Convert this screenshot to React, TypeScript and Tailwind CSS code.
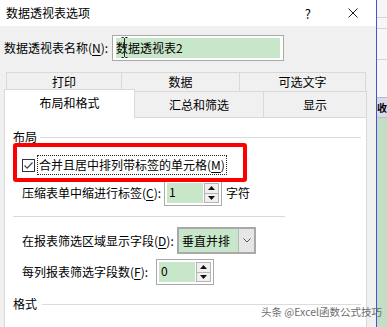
import React from 'react';

const font = { fontFamily: '"Noto Sans CJK SC", "Noto Sans", sans-serif' };

const U = ({ c }: { c: string }) => <span className="underline underline-offset-2">{c}</span>;

const Spin = ({ value }: { value: string }) => (
  <div className="flex h-[26px] w-[58px] border border-[#a9a9a9] bg-white p-[2px]">
    <div className="flex-1 bg-[#c8e6c9] pl-[2px] text-[12px] leading-[18px]">{value}</div>
    <div className="ml-[1px] flex w-[15px] flex-col">
      <div className="flex flex-1 items-center justify-center border border-[#b5b5b5] bg-[#f0f0f0]">
        <svg width="7" height="4" viewBox="0 0 7 4"><path d="M3.5 0 L7 4 L0 4 Z" fill="#111" /></svg>
      </div>
      <div className="-mt-px flex flex-1 items-center justify-center border border-[#b5b5b5] bg-[#f0f0f0]">
        <svg width="7" height="4" viewBox="0 0 7 4"><path d="M0 0 L7 0 L3.5 4 Z" fill="#111" /></svg>
      </div>
    </div>
  </div>
);

export default function App() {
  return (
    <div className="relative flex h-[327px] w-[387px] overflow-hidden bg-white text-black" style={font}>
      {/* dialog */}
      <div className="flex w-[376px] shrink-0 flex-col bg-[#f0f0f0]">
        <div className="flex h-[26px] shrink-0 items-center bg-white pl-[6px] text-[12px]">
          <span className="flex-1">数据透视表选项</span>
          <span className="mr-[37px] text-[13px] leading-none">?</span>
          <svg className="mr-[18px]" width="10" height="10" viewBox="0 0 10 10">
            <path d="M0.5 0.5 L9.5 9.5 M9.5 0.5 L0.5 9.5" stroke="#222" strokeWidth="1" />
          </svg>
        </div>

        <div className="mt-[9px] flex items-center pl-[4px] text-[12px]">
          <span className="w-[108px]">数据透视表名称(<U c="N" />):</span>
          <div className="relative h-[26px] w-[172px] border border-[#a9a9a9] bg-white px-[3px] py-[2px]">
            <div className="h-full bg-[#c8e6c9] text-[12px] leading-[20px]">数据透视表2</div>
            <svg className="absolute left-[8px] top-[1px]" width="7" height="21" viewBox="0 0 7 21">
              <path d="M0.5 0.5 H2.5 L3.5 1.5 L4.5 0.5 H6.5 M3.5 1.5 V19.5 M0.5 20.5 H2.5 L3.5 19.5 L4.5 20.5 H6.5 M1.5 10.5 H5.5" stroke="#222" fill="none" strokeWidth="1" />
            </svg>
          </div>
        </div>

        {/* tabs */}
        <div className="ml-[6px] mt-[11px] flex h-[25px] text-[12px]">
          <div className="flex w-[115px] items-center justify-center border-l border-t border-[#d9d9d9]">打印</div>
          <div className="flex w-[118px] items-center justify-center border-l border-t border-[#d9d9d9]">数据</div>
          <div className="flex w-[127px] items-center justify-center border-x border-t border-[#d9d9d9]">可选文字</div>
        </div>
        <div className="ml-[4px] flex h-[26px] items-end text-[12px]">
          <div className="relative z-10 -mb-px flex h-[29px] w-[131px] items-center justify-center border-x border-t border-[#d9d9d9] bg-white pb-[2px]">布局和格式</div>
          <div className="flex h-[26px] w-[128px] items-center justify-center border-t border-[#d9d9d9]">汇总和筛选</div>
          <div className="flex h-[26px] w-[104px] items-center justify-center border-x border-t border-[#d9d9d9]">显示</div>
        </div>

        {/* panel */}
        <div className="relative ml-[4px] h-[220px] w-[363px] shrink-0 border border-[#d9d9d9] bg-white text-[12px] leading-[16px]">
          <div className="mt-[11px] flex items-center pl-[8px] pr-[5px]">
            <span>布局</span>
            <div className="ml-[3px] h-px flex-1 bg-[#dcdcdc]" />
          </div>

          <div className="mt-[10px] flex h-[20px] items-center pl-[17px]">
            <div className="flex h-[13px] w-[13px] items-center justify-center border border-[#333]">
              <svg width="11" height="11" viewBox="0 0 11 11">
                <path d="M1.5 5.5 L4.2 8.2 L9.5 2.5" stroke="#444" strokeWidth="1.2" fill="none" />
              </svg>
            </div>
            <div className="ml-[2px] flex h-[20px] items-center border border-dotted border-[#222] px-[1px]">
              合并且居中排列带标签的单元格(<U c="M" />)
            </div>
          </div>

          <div className="mt-[5px] flex items-center pl-[17px]">
            <span className="w-[142px]">压缩表单中缩进行标签(<U c="C" />):</span>
            <Spin value="1" />
            <span className="ml-[4px]">字符</span>
          </div>

          <div className="ml-[8px] mt-[10px] h-px w-[272px] bg-[#d9d9d9]" />

          <div className="mt-[10px] flex items-center pl-[17px]">
            <span className="w-[155px]">在报表筛选区域显示字段(<U c="D" />):</span>
            <div className="flex h-[27px] w-[79px] border-2 border-[#a9a9a9]">
              <div className="flex flex-1 items-center bg-[#c8e6c9] pl-[3px]">垂直并排</div>
              <div className="flex w-[16px] items-center justify-center border-l border-[#b9b9b9] bg-[#e6e6e6]">
                <svg width="8" height="5" viewBox="0 0 8 5"><path d="M0.5 0.5 L4 4 L7.5 0.5" stroke="#555" fill="none" /></svg>
              </div>
            </div>
          </div>

          <div className="mt-[5px] flex items-center pl-[17px]">
            <span className="w-[134px]">每列报表筛选字段数(<U c="F" />):</span>
            <Spin value="0" />
          </div>

          <div className="mt-[11px] flex items-center pl-[8px] pr-[5px]">
            <span>格式</span>
            <div className="ml-[5px] h-px flex-1 bg-[#dcdcdc]" />
          </div>

          {/* red annotation */}
          <div className="absolute left-[8px] top-[25px] h-[39px] w-[234px] rounded-[3px] border-4 border-[#ff0000]" />
        </div>
      </div>

      <div className="w-px shrink-0 bg-[#4355d4]" />

      {/* excel sheet behind */}
      <div className="flex w-[10px] shrink-0 flex-col">
        <div className="h-[18px] border-b border-[#d4d4d4] bg-[#f6f6f6]" />
        <div className="h-[11px] border-b border-[#d4d4d4] bg-[#f6f6f6]" />
        <div className="h-[31px] border-b border-[#d4d4d4] bg-[#f6f6f6]" />
        <div className="h-[37px] bg-[#f6f6f6]" />
        <div className="flex h-[21px] items-center border-y border-[#b8bdcc] bg-[#d8dce8] text-[10px] font-bold leading-[12px]">收</div>
        <div className="flex-1 bg-[#c3dfc3]" />
      </div>

      <div className="absolute left-[261px] top-[305px] whitespace-nowrap text-[10.5px] leading-[14px] text-[#6e6e6e]">
        头条 @Excel函数公式技巧
      </div>
    </div>
  );
}
